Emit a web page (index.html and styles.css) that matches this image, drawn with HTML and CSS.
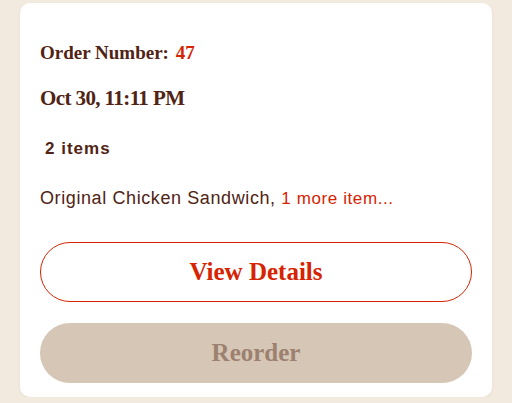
FILE: index.html
```html
<!DOCTYPE html>
<html lang="en">

<head>
    <meta charset="UTF-8">
    <meta name="viewport" content="width=device-width, initial-scale=1.0">
    <title>Order</title>
    <link rel="stylesheet" href="styles.css">
</head>

<body>

    <div class="card">
        <div class="order-number">Order Number: <span class="num">47</span></div>
        <div class="order-date">Oct 30, 11:11 PM</div>
        <div class="count">2 items</div>
        <div class="summary">Original Chicken Sandwich, <span class="more">1 more item...</span></div>

        <button class="btn btn-outline">View Details</button>
        <button class="btn btn-disabled">Reorder</button>
    </div>

</body>

</html>
```

FILE: styles.css
```css
body {
    background-color: #f2eadf;
    margin: 0;
    padding: 3px 20px 0;
    color: #502314;
    font-family: "Liberation Sans", Arial, sans-serif;
}

.card {
    background-color: #fff;
    border-radius: 10px;
    height: 394px;
    box-sizing: border-box;
    padding: 38px 20px 0;
    box-shadow: 0 1px 3px rgba(80, 35, 20, 0.06);
}

.order-number {
    font-family: "Liberation Serif", serif;
    font-weight: bold;
    font-size: 19px;
    line-height: 24px;
}

.num {
    color: #d62300;
    margin-left: 2px;
}

.order-date {
    font-family: "Liberation Serif", serif;
    font-weight: bold;
    font-size: 21px;
    letter-spacing: -0.6px;
    line-height: 26px;
    margin-top: 20px;
}

.count {
    font-weight: bold;
    font-size: 17px;
    letter-spacing: 1px;
    line-height: 22px;
    margin-top: 27px;
    padding-left: 5px;
}

.summary {
    font-size: 18px;
    letter-spacing: 0.6px;
    line-height: 22px;
    margin-top: 27px;
}

.more {
    color: #d62300;
    font-size: 17px;
}

.btn {
    display: block;
    width: 100%;
    height: 60px;
    border-radius: 30px;
    font-family: "Liberation Serif", serif;
    font-weight: bold;
    font-size: 25px;
    cursor: pointer;
}

.btn-outline {
    margin-top: 32px;
    background-color: #fff;
    border: 1px solid #d62300;
    color: #d62300;
}

.btn-disabled {
    margin-top: 21px;
    background-color: #d5c6b5;
    border: none;
    color: #9d8170;
}
```
